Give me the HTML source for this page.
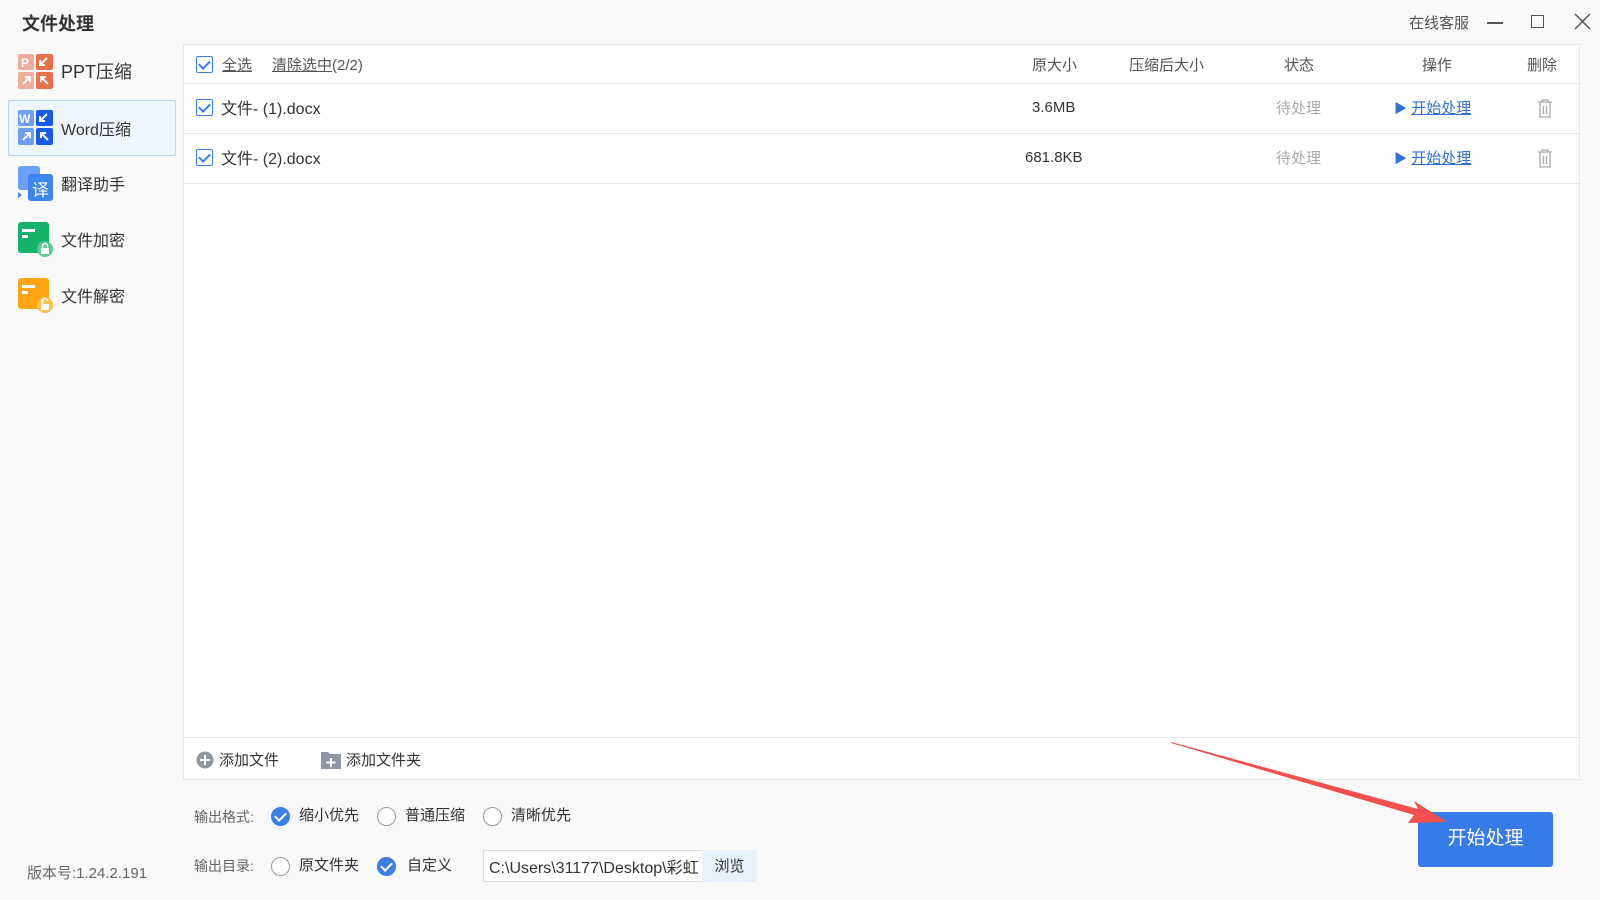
<!DOCTYPE html>
<html><head><meta charset="utf-8"><style>
*{margin:0;padding:0;box-sizing:border-box}
body{width:1600px;height:900px;background:#f9f9f9;font-family:"Liberation Sans","Noto Sans CJK SC",sans-serif;color:#333;position:relative;overflow:hidden}
.a{position:absolute;white-space:nowrap}
.cb{position:absolute;width:17px;height:17px;border:1.5px solid #3a7ee6;border-radius:2px;background:#fff}
.cb:after{content:"";position:absolute;left:4px;top:1px;width:5px;height:9px;border:solid #3a7ee6;border-width:0 2px 2px 0;transform:rotate(45deg)}
.ic{position:absolute;width:35px;height:35px}
.rad{position:absolute;width:19px;height:19px;border-radius:50%;border:1.5px solid #999;background:#fff}
.rad.on{background:#3a7ee6;border-color:#3a7ee6}
.rad.on:after{content:"";position:absolute;left:5px;top:2px;width:5px;height:9px;border:solid #fff;border-width:0 2px 2px 0;transform:rotate(45deg)}
.hl{position:absolute;left:183px;width:1397px;height:1px;background:#e6e6e6}
.lnk{color:#2f6fd8;text-decoration:underline}
</style></head><body>
<div class="a" style="left:22px;top:10px;font-size:18px;font-weight:bold;color:#333">文件处理</div>
<div class="a" style="left:1409px;top:12px;font-size:15px;color:#555">在线客服</div>
<div class="a" style="left:1487px;top:22px;width:16px;height:1.5px;background:#555"></div>
<div class="a" style="left:1531px;top:15px;width:13px;height:13px;border:1.5px solid #555"></div>
<svg class="a" style="left:1574px;top:13px" width="17" height="17"><path d="M1 1L16 16M16 1L1 16" stroke="#555" stroke-width="1.5"/></svg>

<div class="a" style="left:8px;top:100px;width:168px;height:56px;background:#eef5ff;border:1.5px solid #bcd5f6;border-radius:2px"></div>
<svg class="ic" style="left:18px;top:54px" viewBox="0 0 35 35"><rect width="16" height="16" rx="2" fill="#efae9b"/><rect x="18" width="17" height="16" rx="2" fill="#e8704a"/><rect y="18" width="16" height="17" rx="2" fill="#efae9b"/><rect x="18" y="18" width="17" height="17" rx="2" fill="#e8704a"/><text x="3" y="13" font-size="12" font-weight="bold" fill="#fff" font-family="Liberation Sans">P</text><path d="M29 4L22 11M22 6V11H27M5 30L12 23M7 23H12V28M23 23L30 30M23 28V23H28" stroke="#fff" stroke-width="2" fill="none"/></svg>
<div class="a" style="left:61px;top:58px;font-size:18px">PPT压缩</div>
<svg class="ic" style="left:18px;top:110px" viewBox="0 0 35 35"><rect width="16" height="16" rx="2" fill="#6d9ef0"/><rect x="18" width="17" height="16" rx="2" fill="#1a5ae8"/><rect y="18" width="16" height="17" rx="2" fill="#6d9ef0"/><rect x="18" y="18" width="17" height="17" rx="2" fill="#1a5ae8"/><text x="1" y="13" font-size="12" font-weight="bold" fill="#fff" font-family="Liberation Sans">W</text><path d="M29 4L22 11M22 6V11H27M5 30L12 23M7 23H12V28M23 23L30 30M23 28V23H28" stroke="#fff" stroke-width="2" fill="none"/></svg>
<div class="a" style="left:61px;top:116px;font-size:16px">Word压缩</div>
<svg class="ic" style="left:18px;top:166px" viewBox="0 0 35 35"><rect width="22" height="24" rx="3" fill="#6aa0f5"/><rect x="10" y="8" width="25" height="27" rx="3" fill="#3d86f0"/><path d="M0 26L4 29L0 32Z" fill="#3d86f0"/><text x="14" y="30" font-size="17" fill="#fff" font-family="Noto Sans CJK SC">译</text></svg>
<div class="a" style="left:61px;top:171px;font-size:16px">翻译助手</div>
<svg class="ic" style="left:18px;top:222px" viewBox="0 0 35 35"><rect width="31" height="31" rx="3" fill="#17b26a"/><rect x="4" y="7" width="13" height="3" fill="#fff"/><rect x="4" y="13" width="6" height="3" fill="#fff"/><circle cx="27" cy="27" r="8" fill="#5cc98f"/><rect x="23" y="26" width="8" height="6" fill="#fff"/><path d="M24.5 26V24a2.5 2.5 0 015 0V26" stroke="#fff" stroke-width="1.5" fill="none"/></svg>
<div class="a" style="left:61px;top:227px;font-size:16px">文件加密</div>
<svg class="ic" style="left:18px;top:278px" viewBox="0 0 35 35"><rect width="31" height="31" rx="3" fill="#ffa412"/><rect x="4" y="7" width="13" height="3" fill="#fff"/><rect x="4" y="13" width="6" height="3" fill="#fff"/><circle cx="27" cy="27" r="8" fill="#ffc04f"/><rect x="23" y="26" width="8" height="6" fill="#fff"/><path d="M24.5 26V23a2.5 2.5 0 015 0" stroke="#fff" stroke-width="1.5" fill="none"/></svg>
<div class="a" style="left:61px;top:283px;font-size:16px">文件解密</div>
<div class="a" style="left:27px;top:862px;font-size:15px;color:#666">版本号:1.24.2.191</div>

<div class="a" style="left:183px;top:44px;width:1397px;height:736px;background:#fff;border:1px solid #e6e6e6"></div>
<div class="hl" style="top:83px"></div>
<div class="hl" style="top:133px"></div>
<div class="hl" style="top:183px"></div>
<div class="hl" style="top:737px"></div>
<div class="cb" style="left:196px;top:56px"></div>
<div class="a" style="left:222px;top:54px;font-size:15px;color:#555;text-decoration:underline">全选</div>
<div class="a" style="left:272px;top:54px;font-size:15px;color:#555"><u>清除选中</u>(2/2)</div>
<div class="a" style="left:1032px;top:54px;font-size:15px;color:#555">原大小</div>
<div class="a" style="left:1129px;top:54px;font-size:15px;color:#555">压缩后大小</div>
<div class="a" style="left:1284px;top:54px;font-size:15px;color:#555">状态</div>
<div class="a" style="left:1422px;top:54px;font-size:15px;color:#555">操作</div>
<div class="a" style="left:1527px;top:54px;font-size:15px;color:#555">删除</div>

<div class="cb" style="left:196px;top:99px"></div>
<div class="a" style="left:221px;top:95px;font-size:16px">文件- (1).docx</div>
<div class="a" style="left:1032px;top:99px;font-size:15px">3.6MB</div>
<div class="a" style="left:1276px;top:97px;font-size:15px;color:#aaa">待处理</div>
<div class="a" style="left:1394px;top:97px;font-size:15px"><span style="color:#2f6fd8;font-size:13px">▶</span> <span class="lnk">开始处理</span></div>
<svg class="a" style="left:1537px;top:99px" width="16" height="19"><path d="M1 3H15M5 3V1H11V3M3 3V18H13V3M6.5 7V15M9.5 7V15" stroke="#aaa" stroke-width="1.3" fill="none"/></svg>

<div class="cb" style="left:196px;top:149px"></div>
<div class="a" style="left:221px;top:145px;font-size:16px">文件- (2).docx</div>
<div class="a" style="left:1025px;top:149px;font-size:15px">681.8KB</div>
<div class="a" style="left:1276px;top:147px;font-size:15px;color:#aaa">待处理</div>
<div class="a" style="left:1394px;top:147px;font-size:15px"><span style="color:#2f6fd8;font-size:13px">▶</span> <span class="lnk">开始处理</span></div>
<svg class="a" style="left:1537px;top:149px" width="16" height="19"><path d="M1 3H15M5 3V1H11V3M3 3V18H13V3M6.5 7V15M9.5 7V15" stroke="#aaa" stroke-width="1.3" fill="none"/></svg>

<svg class="a" style="left:196px;top:751px" width="18" height="18"><circle cx="9" cy="9" r="8.5" fill="#8e96a6"/><path d="M9 4V14M4 9H14" stroke="#fff" stroke-width="2"/></svg>
<div class="a" style="left:219px;top:749px;font-size:15px">添加文件</div>
<svg class="a" style="left:321px;top:750px" width="20" height="19"><path d="M0 2H7L9 4H20V19H0Z" fill="#8e96a6"/><path d="M10 8V17M5.5 12.5H14.5" stroke="#fff" stroke-width="2"/></svg>
<div class="a" style="left:346px;top:749px;font-size:15px">添加文件夹</div>

<div class="a" style="left:194px;top:807px;font-size:14px;color:#666">输出格式:</div>
<div class="rad on" style="left:271px;top:807px"></div>
<div class="a" style="left:299px;top:804px;font-size:15px">缩小优先</div>
<div class="rad" style="left:377px;top:807px"></div>
<div class="a" style="left:405px;top:804px;font-size:15px">普通压缩</div>
<div class="rad" style="left:483px;top:807px"></div>
<div class="a" style="left:511px;top:804px;font-size:15px">清晰优先</div>

<div class="a" style="left:194px;top:856px;font-size:14px;color:#666">输出目录:</div>
<div class="rad" style="left:271px;top:857px"></div>
<div class="a" style="left:299px;top:854px;font-size:15px">原文件夹</div>
<div class="rad on" style="left:377px;top:857px"></div>
<div class="a" style="left:407px;top:854px;font-size:15px">自定义</div>
<div class="a" style="left:483px;top:850px;width:220px;height:32px;border:1px solid #ddd;background:#fff;overflow:hidden;font-size:16px;padding:3px 0 0 5px">C:\Users\31177\Desktop\彩虹</div>
<div class="a" style="left:702px;top:850px;width:55px;height:32px;background:#e8f0fc;font-size:15px;text-align:center;padding-top:5px">浏览</div>

<div class="a" style="left:1418px;top:812px;width:135px;height:55px;background:#377be8;border-radius:3px;color:#fff;font-size:19px;text-align:center;line-height:53px">开始处理</div>
<svg class="a" style="left:0;top:0" width="1600" height="900"><path d="M1171 742L1418 809L1414 801L1447 822L1408 823L1414 815L1171 743Z" fill="#f24f4f"/></svg>
</body></html>
